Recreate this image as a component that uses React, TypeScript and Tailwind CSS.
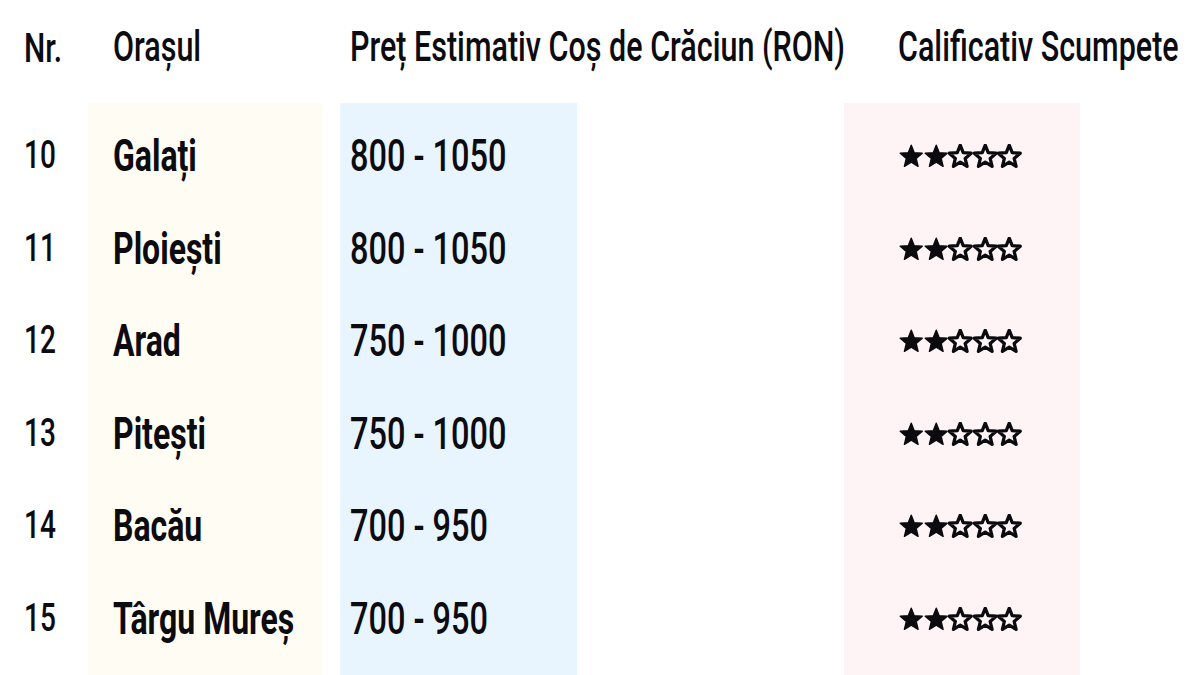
const rows = [
  { nr: "10", city: "Galați", price: "800 - 1050" },
  { nr: "11", city: "Ploiești", price: "800 - 1050" },
  { nr: "12", city: "Arad", price: "750 - 1000" },
  { nr: "13", city: "Pitești", price: "750 - 1000" },
  { nr: "14", city: "Bacău", price: "700 - 950" },
  { nr: "15", city: "Târgu Mureș", price: "700 - 950" },
];

function Star({ filled }: { filled: boolean }) {
  return (
    <svg viewBox="0 0 24 24" className="w-[24.5px] h-[24.5px] shrink-0">
      <polygon
        points="12,1.2 14.9,8.5 22.8,9 16.8,14.1 18.7,21.9 12,17.7 5.3,21.9 7.2,14.1 1.2,9 9.1,8.5"
        fill={filled ? "#0b0b0f" : "none"}
        stroke="#0b0b0f"
        strokeWidth={filled ? 1.4 : 3.2}
        strokeLinejoin="round"
      />
    </svg>
  );
}

function Stars({ count }: { count: number }) {
  return (
    <div className="flex items-center">
      {[0, 1, 2, 3, 4].map((i) => (
        <Star key={i} filled={i < count} />
      ))}
    </div>
  );
}

function Txt({ children, className = "" }: { children: React.ReactNode; className?: string }) {
  return (
    <span className={`inline-block whitespace-nowrap leading-none scale-y-[1.38] ${className}`}>
      {children}
    </span>
  );
}

export default function App() {
  return (
    <div
      className="w-[1200px] h-[675px] overflow-hidden bg-white flex text-[#0b0b10]"
      style={{ fontFamily: "Roboto, 'Liberation Sans', sans-serif" }}
    >
      {/* Nr. */}
      <div className="w-[88px] flex flex-col shrink-0">
        <div className="h-[103px] flex items-center pl-[24px] pb-[8px]">
          <Txt className="text-[30px] font-medium">Nr.</Txt>
        </div>
        <div className="flex-1 pt-[7px] pl-[24px]">
          {rows.map((r) => (
            <div key={r.nr} className="h-[92.5px] flex items-center">
              <Txt className="text-[28px] font-medium">{r.nr}</Txt>
            </div>
          ))}
        </div>
      </div>

      {/* Orașul */}
      <div className="w-[235px] flex flex-col shrink-0">
        <div className="h-[103px] flex items-center pl-[25px] pb-[8px]">
          <Txt className="text-[30.5px] font-medium">Orașul</Txt>
        </div>
        <div className="flex-1 pt-[7px] pl-[25px] bg-[#fffdf3]">
          {rows.map((r) => (
            <div key={r.nr} className="h-[92.5px] flex items-center">
              <Txt className="text-[32px] font-bold">{r.city}</Txt>
            </div>
          ))}
        </div>
      </div>

      <div className="w-[17px] shrink-0" />

      {/* Preț */}
      <div className="w-[237px] flex flex-col shrink-0">
        <div className="h-[103px] flex items-center pl-[10px] pb-[8px]">
          <Txt className="text-[30.5px] font-medium">Preț Estimativ Coș de Crăciun (RON)</Txt>
        </div>
        <div className="flex-1 pt-[7px] pl-[10px] bg-[#e8f4fe]">
          {rows.map((r) => (
            <div key={r.nr} className="h-[92.5px] flex items-center">
              <Txt className="text-[32.5px] font-medium">{r.price}</Txt>
            </div>
          ))}
        </div>
      </div>

      <div className="w-[267px] shrink-0" />

      {/* Calificativ */}
      <div className="w-[236px] flex flex-col shrink-0">
        <div className="h-[103px] flex items-center pl-[54px] pb-[8px]">
          <Txt className="text-[30.5px] font-medium">Calificativ Scumpete</Txt>
        </div>
        <div className="flex-1 pt-[7px] pl-[55px] bg-[#fef4f5]">
          {rows.map((r) => (
            <div key={r.nr} className="h-[92.5px] flex items-center">
              <Stars count={2} />
            </div>
          ))}
        </div>
      </div>

      <div className="flex-1" />
    </div>
  );
}
